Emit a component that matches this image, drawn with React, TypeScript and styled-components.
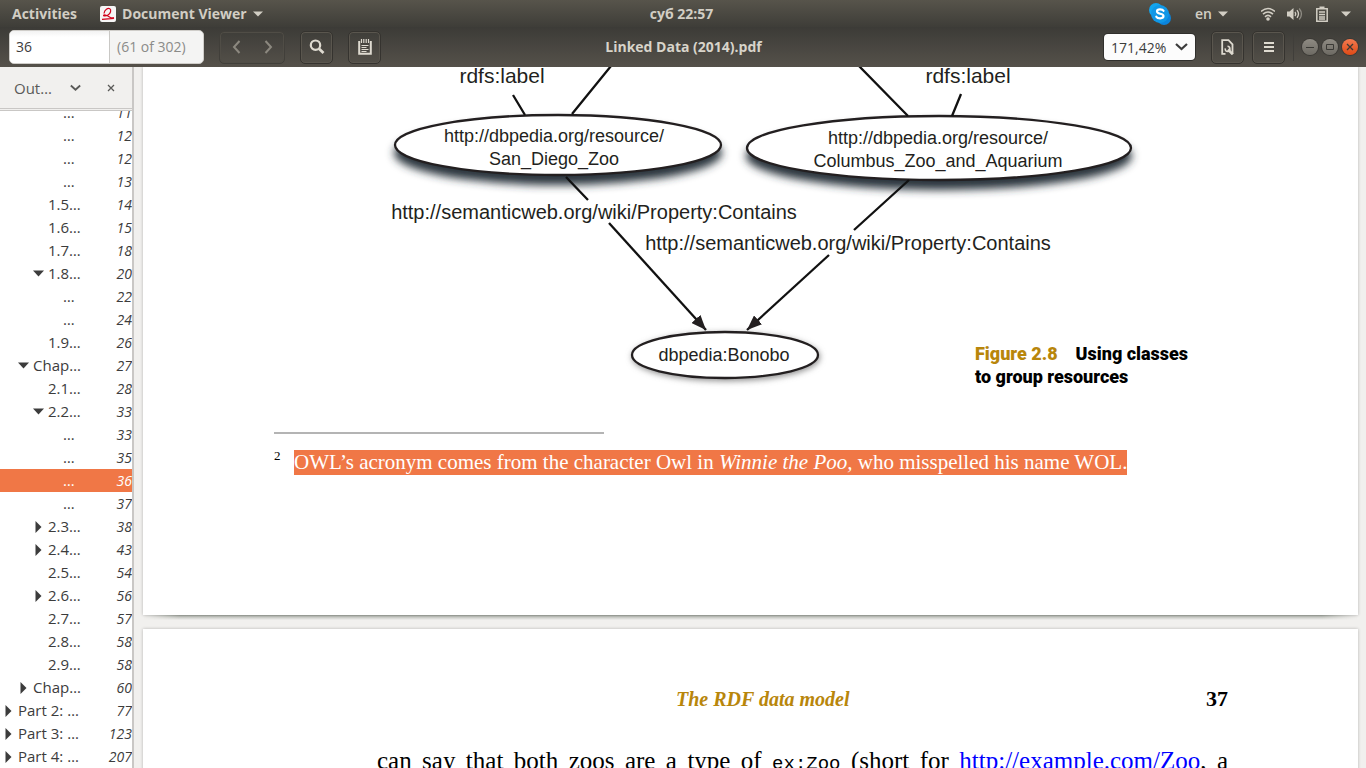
import React from "react";
import styled, { createGlobalStyle, css } from "styled-components";

const ui = '"Open Sans", "Noto Sans", sans-serif';
const book = '"Liberation Serif", serif';
const accent = "#f07746";
const gold = "#b8860b";

const GlobalStyle = createGlobalStyle`
  *, *::before, *::after { box-sizing: border-box; }
  body { margin: 0; background: #f1f0ee; font-family: ${ui}; overflow: hidden; }
  button, input, select { font: inherit; color: inherit; margin: 0; padding: 0; border: 0; background: none; }
  a { color: inherit; text-decoration: none; }
  svg { display: block; flex: none; }
`;

const Desktop = styled.div`
  display: flex;
  flex-direction: column;
  height: 100vh;
  overflow: hidden;
`;

const TopBar = styled.header`
  display: grid;
  grid-template-columns: 1fr auto 1fr;
  align-items: center;
  height: 27px;
  flex: none;
  padding: 0 15px 0 12px;
  background: linear-gradient(#57544b, #3e3d38);
  color: #d2cec4;
  font-size: 14px;
  font-weight: 700;
  line-height: 20px;
`;

const BarGroup = styled.div<{ $end?: boolean; $gap: number }>`
  display: flex;
  align-items: center;
  gap: ${(p) => p.$gap}px;
  justify-content: ${(p) => (p.$end ? "flex-end" : "flex-start")};
`;

const BarButton = styled.button<{ $light?: boolean }>`
  display: flex;
  align-items: center;
  gap: 6px;
  font-weight: ${(p) => (p.$light ? 600 : 700)};
  white-space: nowrap;
`;

const Toolbar = styled.div`
  display: grid;
  grid-template-columns: 1fr auto 1fr;
  align-items: center;
  height: 40px;
  flex: none;
  padding: 0 8px 0 9px;
  background: linear-gradient(#3c3b37, #55514a);
  color: #d8d4ca;
  font-size: 14px;
`;

const PageEntry = styled.label`
  display: flex;
  width: 195px;
  height: 34px;
  border-radius: 5px;
  overflow: hidden;
  background: #f4f4f3;
  border: 1px solid #cfcdc9;
  color: #8b8b89;
  line-height: 32px;
`;

const PageInput = styled.input`
  width: 100px;
  padding: 0 6px;
  background: linear-gradient(#f2f2f2, #fff 6px);
  border-right: 1px solid #c9c8c5;
  color: #3c3c3c;
  outline: none;
`;

const PageTotal = styled.span`
  padding-left: 7px;
`;

const Spacer = styled.span<{ $w: number }>`
  width: ${(p) => p.$w}px;
  flex: none;
`;

const raised = css`
  height: 33px;
  border: 1px solid #35332f;
  border-radius: 5px;
  box-shadow: inset 0 0 0 1px #5a564e;
`;

const NavGroup = styled.div`
  ${raised}
  display: flex;
  width: 66px;
  color: #8c887f;
  border-color: #413f3a;
  box-shadow: inset 0 0 0 1px #504d46;
`;

const NavButton = styled.button`
  flex: 1;
  display: grid;
  place-items: center;
`;

const ToolButton = styled.button`
  ${raised}
  width: 33px;
  display: grid;
  place-items: center;
  color: #dedad0;
`;

const DocTitle = styled.h1`
  margin: 0;
  font-size: 14px;
  font-weight: 700;
  line-height: 20px;
`;

const Picker = styled.label<{ $light?: boolean }>`
  position: relative;
  display: flex;
  align-items: center;
  ${(p) =>
    p.$light
      ? css`
          width: 91px;
          height: 26px;
          border-radius: 4px;
          background: #fcfcfc;
          box-shadow: 0 0 0 1px #302f2c;
          color: #3c3c3c;
        `
      : css`
          width: 78px;
          height: 28px;
          font-size: 15px;
          color: #5a5a58;
        `}
  > svg {
    position: absolute;
    right: ${(p) => (p.$light ? 7 : 4)}px;
    pointer-events: none;
  }
`;

const Select = styled.select`
  appearance: none;
  width: 100%;
  padding-left: 7px;
  outline: none;
`;

const Divider = styled.span`
  width: 1px;
  height: 28px;
  background: #403e3a;
`;

const WindowButton = styled.button<{ $close?: boolean }>`
  display: grid;
  place-items: center;
  width: 16px;
  height: 16px;
  border-radius: 50%;
  color: #3a3935;
  background: ${(p) =>
    p.$close ? "linear-gradient(#f37a50, #df4a16)" : "linear-gradient(#8f8b83, #6d6a63)"};
  box-shadow: 0 0 0 1px #3b3935;
`;

const Workspace = styled.div`
  display: flex;
  flex: 1;
  min-height: 0;
`;

const Sidebar = styled.aside`
  display: flex;
  flex-direction: column;
  width: 134px;
  flex: none;
  border-right: 2px solid #c9c7c5;
  background: #fff;
  font-size: 15px;
  color: #3c3c3c;
`;

const SidebarHead = styled.div`
  display: flex;
  align-items: center;
  justify-content: space-between;
  height: 44px;
  flex: none;
  padding: 0 17px 0 7px;
  background: #f1f0ee;
  border-bottom: 3px double #c9c7c5;
`;

const CloseButton = styled.button`
  display: grid;
  place-items: center;
  color: #5a5a58;
`;

const Outline = styled.ul`
  display: flex;
  flex-direction: column;
  justify-content: flex-end;
  flex: 1;
  min-height: 0;
  margin: 0;
  padding: 0;
  overflow: hidden;
  list-style: none;
`;

const OutlineItem = styled.li`
  flex: none;
`;

const OutlineLink = styled.a<{ $level: number; $active?: boolean }>`
  display: flex;
  align-items: center;
  gap: 4px;
  height: 23px;
  padding-left: ${(p) => p.$level * 15 + 3}px;
  line-height: 23px;
  white-space: nowrap;
  color: ${(p) => (p.$active ? "#fff" : "inherit")};
  background: ${(p) => (p.$active ? accent : "none")};
`;

const Expander = styled.span`
  display: grid;
  place-items: center;
  width: 11px;
  flex: none;
`;

const PageNo = styled.em`
  margin-left: auto;
  font-size: 14px;
`;

const Pages = styled.main`
  display: flex;
  flex-direction: column;
  gap: 14px;
  flex: 1;
  min-width: 0;
  padding: 0 8px 0 9px;
  overflow: hidden;
  background: #f1f0ee;
`;

const Sheet = styled.article`
  position: relative;
  flex: none;
  padding: 0 130px 0 131px;
  background: #fff;
  box-shadow: 0 0 3px rgba(0, 0, 0, 0.25);
  font-family: ${book};
  color: #000;

  &::after {
    content: "";
    position: absolute;
    top: 100%;
    left: 0;
    right: 0;
    height: 5px;
    background: linear-gradient(#878c85, #c4c6c1 40%, transparent);
    mask-image: linear-gradient(90deg, transparent, #000 36px calc(100% - 36px), transparent);
  }
`;

const Figure = styled.figure`
  display: grid;
  grid-template-columns: 1fr 253px;
  align-items: end;
  margin: 0;
`;

const Diagram = styled.svg`
  grid-area: 1 / 1 / 2 / 3;
  overflow: visible;
  font-family: "Liberation Sans", sans-serif;
  fill: #231f20;
`;

const Caption = styled.figcaption`
  grid-area: 1 / 2;
  font-family: Roboto, "Liberation Sans", sans-serif;
  font-size: 18px;
  font-weight: 900;
  line-height: 23px;
`;

const CaptionLine = styled.span`
  display: flex;
  gap: 18px;
`;

const FigureNumber = styled.span`
  color: ${gold};
`;

const Footnote = styled.footer`
  padding: 44px 0 140px;
`;

const Rule = styled.hr`
  width: 330px;
  height: 2px;
  margin: 0 0 16px;
  border: 0;
  background: #b4b4b4;
`;

const Note = styled.p`
  display: flex;
  margin: 0;
  line-height: 25px;
  white-space: nowrap;
`;

const NoteMark = styled.span`
  width: 20px;
  flex: none;
  font-size: 13px;
  line-height: 12px;
`;

const Highlight = styled.span`
  background: ${accent};
  color: #fff;
  font-size: 21px;
`;

const RunningHead = styled.div`
  display: flex;
  justify-content: space-between;
  padding: 58px 0 0 402px;
  font-size: 20px;
  font-weight: 700;
  line-height: 24px;
`;

const RunningTitle = styled.em`
  color: ${gold};
`;

const Folio = styled.span`
  font-size: 22px;
`;

const Body = styled.p`
  margin: 36px 0 0 103px;
  font-size: 25px;
  line-height: 28px;
  text-align-last: justify;
  white-space: nowrap;
`;

const Code = styled.code`
  font-family: "Liberation Mono", monospace;
  font-size: 19px;
`;

const TextLink = styled.a`
  color: #0000ff;
`;

const Caret = () => (
  <svg width="10" height="6" viewBox="0 0 10 6" fill="currentColor"><path d="M0 .5h10L5 5.5z" /></svg>
);
const Chevron = ({ size = 13 }: { size?: number }) => (
  <svg width={size} height="8" viewBox="0 0 13 8" fill="none" stroke="currentColor" strokeWidth="2.2"><path d="M1 1l5.500 5L12 1" /></svg>
);
const Arrow = ({ right }: { right?: boolean }) => (
  <svg width="9" height="14" viewBox="0 0 9 14" fill="none" stroke="currentColor" strokeWidth="2">
    <path d={right ? "M1.500 1l5.500 6-5.500 6" : "M7.500 1L2 7l5.500 6"} />
  </svg>
);
const Cross = () => (
  <svg width="8" height="8" viewBox="0 0 8 8" stroke="currentColor" strokeWidth="1.3"><path d="M1 1l6 6M7 1L1 7" /></svg>
);

type Row = [level: number, label: string, page: number, state?: "open" | "closed"];
const rows: Row[] = [
  [3, "…", 11], [3, "…", 12], [3, "…", 12], [3, "…", 13],
  [2, "1.5…", 14], [2, "1.6…", 15], [2, "1.7…", 18], [2, "1.8…", 20, "open"],
  [3, "…", 22], [3, "…", 24], [2, "1.9…", 26], [1, "Chap…", 27, "open"],
  [2, "2.1…", 28], [2, "2.2…", 33, "open"], [3, "…", 33], [3, "…", 35],
  [3, "…", 36], [3, "…", 37], [2, "2.3…", 38, "closed"], [2, "2.4…", 43, "closed"],
  [2, "2.5…", 54], [2, "2.6…", 56, "closed"], [2, "2.7…", 57], [2, "2.8…", 58],
  [2, "2.9…", 58], [1, "Chap…", 60, "closed"], [0, "Part 2: …", 77, "closed"],
  [0, "Part 3: …", 123, "closed"], [0, "Part 4: …", 207, "closed"],
];

const OutlineRow = ({ row: [level, label, page, state] }: { row: Row }) => (
  <OutlineItem>
    <OutlineLink href={`#page-${page}`} $level={level} $active={page === 36}>
      <Expander>
        {state === "open" && (
          <svg width="11" height="7" viewBox="0 0 11 7" fill="currentColor"><path d="M0 .5h11L5.500 6.500z" /></svg>
        )}
        {state === "closed" && (
          <svg width="7" height="12" viewBox="0 0 7 12" fill="currentColor"><path d="M.5 0v12l6-6z" /></svg>
        )}
      </Expander>
      {label}
      <PageNo>{page}</PageNo>
    </OutlineLink>
  </OutlineItem>
);

const ZooDiagram = () => (
  <Diagram width="870" height="321" viewBox="0 0 870 321" role="img" aria-label="RDF graph of two zoos that contain dbpedia:Bonobo">
    <defs>
      <filter id="deep" x="-10%" y="-40%" width="120%" height="200%"><feGaussianBlur stdDeviation="4.500" /></filter>
      <filter id="soft" x="-10%" y="-40%" width="120%" height="200%"><feGaussianBlur stdDeviation="3" /></filter>
      <marker id="head" viewBox="0 0 15 12" refX="15" refY="6" markerWidth="15" markerHeight="12" markerUnits="userSpaceOnUse" orient="auto">
        <path d="M0 0l15 6-15 6z" />
      </marker>
    </defs>
    <g filter="url(#deep)" fill="#2c353c">
      <ellipse cx="284" cy="86" rx="164" ry="32" />
      <ellipse cx="665" cy="89" rx="193" ry="34" />
    </g>
    <ellipse cx="452" cy="290" rx="94" ry="24" fill="#8b8b8b" filter="url(#soft)" />
    <g fill="#fff" stroke="#231f20" strokeWidth="2.300">
      <ellipse cx="284" cy="78" rx="163" ry="30" />
      <ellipse cx="665" cy="81" rx="192" ry="32" />
      <ellipse cx="451" cy="288" rx="93" ry="23" />
    </g>
    <g stroke="#111" strokeWidth="2.300" fill="none">
      <path d="M239 28l12 20M337-1l-39 48M585-1l49 50M687 27l-9 22M292 110l22 23M635 113l-55 50" />
      <path d="M335 156L432 263" markerEnd="url(#head)" />
      <path d="M555 188L473 263" markerEnd="url(#head)" />
    </g>
    <g textAnchor="middle" fontSize="18">
      <text x="280" y="75">http://dbpedia.org/resource/</text>
      <text x="280" y="98">San_Diego_Zoo</text>
      <text x="664" y="77">http://dbpedia.org/resource/</text>
      <text x="664" y="100">Columbus_Zoo_and_Aquarium</text>
      <text x="450" y="294">dbpedia:Bonobo</text>
    </g>
    <g textAnchor="middle" fontSize="21">
      <text x="228" y="16">rdfs:label</text>
      <text x="694" y="16">rdfs:label</text>
    </g>
    <g textAnchor="middle" fontSize="20">
      <text x="320" y="152">http://semanticweb.org/wiki/Property:Contains</text>
      <text x="574" y="183">http://semanticweb.org/wiki/Property:Contains</text>
    </g>
  </Diagram>
);

export default function App() {
  return (
    <Desktop>
      <GlobalStyle />
      <TopBar>
        <BarGroup $gap={23}>
          <BarButton>Activities</BarButton>
          <BarButton>
            <svg width="16" height="16" viewBox="0 0 16 16">
              <rect width="16" height="16" rx="2" fill="#f6f6f6" />
              <path d="M4 7.500C4.500 3.500 8 1.800 9.800 2.800s.8 4.700-1.800 6.200-5 1-4.300.2 3.800.3 5.800 1.800 3 1.200 4.500.6M2 13.300l12-1" fill="none" stroke="#d0021b" strokeWidth="1.200" />
            </svg>
            Document Viewer
            <Caret />
          </BarButton>
        </BarGroup>
        <BarButton>суб 22:57</BarButton>
        <BarGroup $gap={12} $end>
          <svg width="22" height="22" viewBox="0 0 22 22">
            <circle cx="7" cy="7" r="7" fill="#12a5ee" />
            <circle cx="15" cy="15" r="7" fill="#0b84dc" />
            <circle cx="11" cy="11" r="9" fill="#1097e6" />
            <path d="M14.500 7.800C13.500 6 8 5.500 8 8.500c0 3 6.500 1.500 6.500 4.600 0 3-6 2.700-7.200.6" fill="none" stroke="#fff" strokeWidth="2.200" strokeLinecap="round" />
          </svg>
          <Spacer $w={0} />
          <BarButton $light>en<Caret /></BarButton>
          <Spacer $w={9} />
          <svg width="14" height="14" viewBox="0 0 14 14" fill="none" stroke="currentColor" strokeWidth="1.600">
            <path d="M0 4.500Q7-1.500 14 4.500M2 7.200Q7 2.800 12 7.200M4 9.800Q7 7 10 9.800" />
            <circle cx="7" cy="12" r="1.800" fill="currentColor" stroke="none" />
          </svg>
          <svg width="16" height="14" viewBox="0 0 16 14" fill="none" stroke="currentColor" strokeWidth="1.300">
            <path d="M0 4.500h2.500L6.500 1v12l-4-3.500H0z" fill="currentColor" stroke="none" />
            <path d="M8 5q1.500 2 0 4M10 3.200q3 3.800 0 7.600" />
            <path d="M12.200 1.500q4.500 5.500 0 11" opacity=".5" />
          </svg>
          <svg width="14" height="16" viewBox="0 0 14 16" fill="none" stroke="currentColor" strokeWidth="1.500">
            <path d="M1.800 2.800h10.400v12.400H1.800zM4.500 1.200h5M4 6h6M4 8.500h6M4 11h6M4 13h6" />
          </svg>
          <Caret />
        </BarGroup>
      </TopBar>

      <Toolbar>
        <BarGroup $gap={15}>
          <PageEntry>
            <PageInput defaultValue="36" aria-label="Page" />
            <PageTotal>(61 of 302)</PageTotal>
          </PageEntry>
          <NavGroup>
            <NavButton aria-label="Previous page"><Arrow /></NavButton>
            <NavButton aria-label="Next page"><Arrow right /></NavButton>
          </NavGroup>
          <ToolButton aria-label="Find">
            <svg width="16" height="16" viewBox="0 0 16 16" fill="none" stroke="currentColor" strokeWidth="2.200">
              <circle cx="6.500" cy="6.200" r="4.700" /><path d="M10 9.700l4.500 4.300" strokeWidth="2.800" />
            </svg>
          </ToolButton>
          <ToolButton aria-label="Annotations">
            <svg width="14" height="16" viewBox="0 0 14 16" fill="none" stroke="currentColor">
              <path d="M1.200 2v12.800h11.600V2" strokeWidth="2" />
              <path d="M3.500 0v4M5.800 0v4M8.200 0v4M10.500 0v4" strokeWidth="1.200" />
              <path d="M3.500 6.500h7M3.500 8.500h5M3.500 10.500h7M3.500 12.500h5" strokeWidth="1.100" />
            </svg>
          </ToolButton>
        </BarGroup>
        <DocTitle>Linked Data (2014).pdf</DocTitle>
        <BarGroup $gap={8} $end>
          <Picker $light>
            <Select aria-label="Zoom"><option>171,42%</option></Select>
            <Chevron />
          </Picker>
          <Spacer $w={0} />
          <ToolButton aria-label="Document properties">
            <svg width="13" height="16" viewBox="0 0 13 16" fill="none" stroke="currentColor" strokeWidth="1.800">
              <path d="M4.500 14.800H1.200V1.200h6.300l4 4.200v9.200" />
              <path d="M7 10.500l4.800 4.800" strokeWidth="2.600" />
              <path d="M4.300 9.300q-.4 3.200 2.700 3.200 2-.5 1.900-2.500 0-2.500-2.400-2.700" strokeWidth="1.600" />
            </svg>
          </ToolButton>
          <ToolButton aria-label="Menu">
            <svg width="12" height="12" viewBox="0 0 12 12" fill="currentColor"><path d="M1 1h10v2H1zM1 5h10v2H1zM1 9h10v2H1z" /></svg>
          </ToolButton>
          <Divider />
          <BarGroup $gap={4}>
            <WindowButton aria-label="Minimise">
              <svg width="8" height="8" viewBox="0 0 8 8" stroke="currentColor"><path d="M0 4.500h8" /></svg>
            </WindowButton>
            <WindowButton aria-label="Maximise">
              <svg width="8" height="8" viewBox="0 0 8 8" stroke="currentColor" fill="none"><path d="M.5 1.500h7v5h-7z" /></svg>
            </WindowButton>
            <WindowButton aria-label="Close" $close><Cross /></WindowButton>
          </BarGroup>
        </BarGroup>
      </Toolbar>

      <Workspace>
        <Sidebar>
          <SidebarHead>
            <Picker>
              <Select aria-label="Sidebar view"><option>Out…</option></Select>
              <Chevron size={11} />
            </Picker>
            <CloseButton aria-label="Close sidebar"><Cross /></CloseButton>
          </SidebarHead>
          <Outline>
            {rows.map((row, i) => <OutlineRow key={i} row={row} />)}
          </Outline>
        </Sidebar>

        <Pages>
          <Sheet>
            <Figure>
              <ZooDiagram />
              <Caption>
                <CaptionLine>
                  <FigureNumber>Figure 2.8</FigureNumber>
                  <span>Using classes</span>
                </CaptionLine>
                <CaptionLine>to group resources</CaptionLine>
              </Caption>
            </Figure>
            <Footnote>
              <Rule />
              <Note>
                <NoteMark>2</NoteMark>
                <Highlight>
                  OWL’s acronym comes from the character Owl in <em>Winnie the Poo,</em> who misspelled his name WOL.
                </Highlight>
              </Note>
            </Footnote>
          </Sheet>
          <Sheet>
            <RunningHead>
              <RunningTitle>The RDF data model</RunningTitle>
              <Folio>37</Folio>
            </RunningHead>
            <Body>
              can say that both zoos are a type of <Code>ex:Zoo</Code> (short for{" "}
              <TextLink href="http://example.com/Zoo">http://example.com/Zoo</TextLink>, a
            </Body>
          </Sheet>
        </Pages>
      </Workspace>
    </Desktop>
  );
}
